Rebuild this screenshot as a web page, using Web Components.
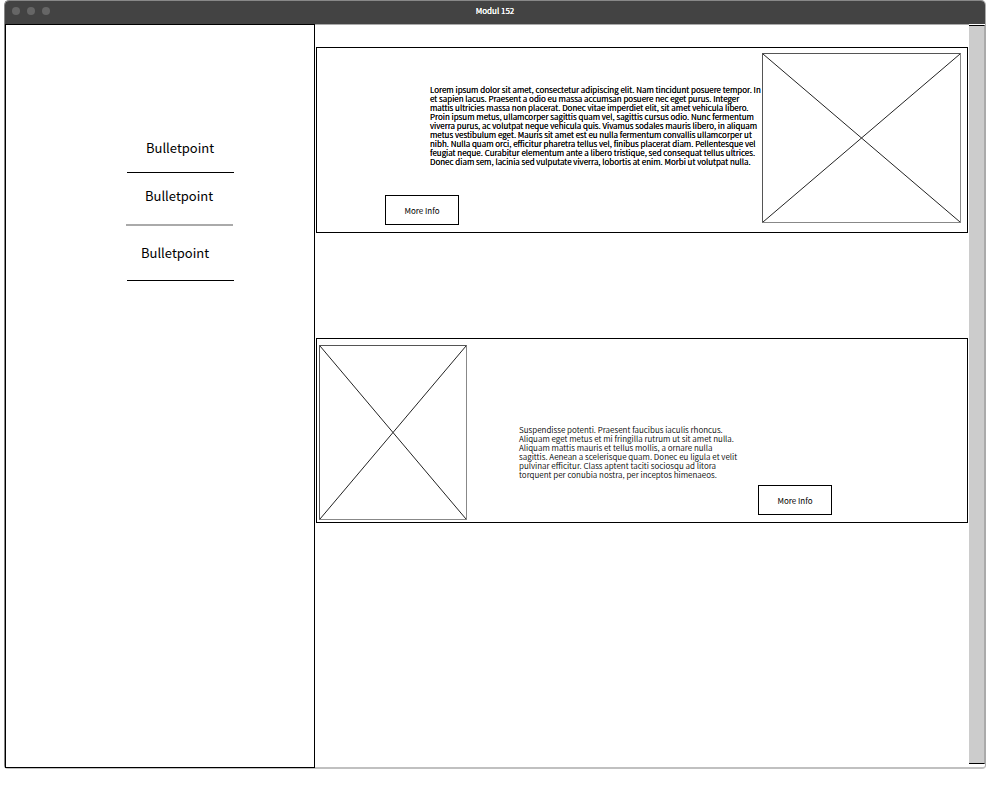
<!DOCTYPE html>
<html lang="en">
<head>
<meta charset="utf-8">
<meta name="viewport" content="width=device-width, initial-scale=1">
<title>Modul 152</title>
<style>
  body { margin: 0; background: #fff; color: #000; font-family: "Noto Sans CJK SC", "Noto Sans", sans-serif; }
</style>
</head>
<body>
<app-window>
  <span slot="title">Modul 152</span>
  <side-menu slot="side">
    <menu-entry>Bulletpoint</menu-entry>
    <menu-entry class="soft">Bulletpoint</menu-entry>
    <menu-entry class="last">Bulletpoint</menu-entry>
  </side-menu>
  <info-card>Lorem ipsum dolor sit amet, consectetur adipiscing elit. Nam tincidunt posuere tempor. In<br>
    et sapien lacus. Praesent a odio eu massa accumsan posuere nec eget purus. Integer<br>
    mattis ultricies massa non placerat. Donec vitae imperdiet elit, sit amet vehicula libero.<br>
    Proin ipsum metus, ullamcorper sagittis quam vel, sagittis cursus odio. Nunc fermentum<br>
    viverra purus, ac volutpat neque vehicula quis. Vivamus sodales mauris libero, in aliquam<br>
    metus vestibulum eget. Mauris sit amet est eu nulla fermentum convallis ullamcorper ut<br>
    nibh. Nulla quam orci, efficitur pharetra tellus vel, finibus placerat diam. Pellentesque vel<br>
    feugiat neque. Curabitur elementum ante a libero tristique, sed consequat tellus ultrices.<br>
    Donec diam sem, lacinia sed vulputate viverra, lobortis at enim. Morbi ut volutpat nulla.</info-card>
  <info-card class="flip">Suspendisse potenti. Praesent faucibus iaculis rhoncus.<br>
    Aliquam eget metus et mi fringilla rutrum ut sit amet nulla.<br>
    Aliquam mattis mauris et tellus mollis, a ornare nulla<br>
    sagittis. Aenean a scelerisque quam. Donec eu ligula et velit<br>
    pulvinar efficitur. Class aptent taciti sociosqu ad litora<br>
    torquent per conubia nostra, per inceptos himenaeos.</info-card>
</app-window>
<script>
  const define = (name, html) => {
    const template = document.createElement('template');
    template.innerHTML = html;
    customElements.define(name, class extends HTMLElement {
      constructor() {
        super();
        this.attachShadow({ mode: 'open' }).append(template.content.cloneNode(true));
      }
    });
  };

  define('app-window', `
    <style>
      :host { display: flex; flex-direction: column; box-sizing: border-box;
        min-height: calc(100vh - 30px); margin: 0 20px 30px 4px;
        border: 1px solid #888; border-right-color: #aaa; border-bottom: 2px solid #c0c0c0;
        border-radius: 5px 5px 4px 4px; }
      header { display: grid; grid-template-columns: 1fr auto 1fr; align-items: center; box-sizing: border-box;
        height: 23px; padding-bottom: 3px; background: #434343; color: #fff; border-radius: 4px 4px 0 0; }
      h1 { margin: 0; font-size: 8px; line-height: 12px; font-weight: 400;
        text-shadow: 0 0 0 currentColor; }
      .dots { display: flex; gap: 7px; padding-left: 7px; }
      .dots i { width: 8px; height: 8px; border-radius: 50%; background: #666; }
      .body { flex: 1; display: flex; }
      main { flex: 1; min-width: 0; display: flex; flex-direction: column; gap: 105px;
        padding: 22px 1px 0; border-top: 1px solid #aaa; }
      .scroll { box-sizing: border-box; width: 16px; margin: 1px 0 3px; background: #ccc;
        border: 1px solid #000; border-left: 0; border-right-color: #aaa; }
    </style>
    <header>
      <div class="dots"><i></i><i></i><i></i></div>
      <h1><slot name="title"></slot></h1>
    </header>
    <div class="body">
      <slot name="side"></slot>
      <main><slot></slot></main>
      <div class="scroll"></div>
    </div>`);

  define('side-menu', `
    <style>
      :host { display: block; box-sizing: border-box; width: 310px; flex: none;
        border: 1px solid #000; padding-top: 113px; margin-bottom: -1px; }
      nav { display: flex; flex-direction: column; width: 107px; margin-left: 121px; }
    </style>
    <nav><slot></slot></nav>`);

  define('menu-entry', `
    <style>
      :host { display: block; padding: 0 0 14px 19px; border-bottom: 1px solid #000; }
      :host(.soft) { margin: 13px 1px 0 -1px; padding-bottom: 18px; border-bottom: 2px solid #aaa; }
      :host(.last) { margin-top: 17px; padding: 0 0 17px 14px; }
      a { display: block; color: inherit; text-decoration: none; font-size: 13px; line-height: 20px; }
    </style>
    <a href="#"><slot></slot></a>`);

  define('info-card', `
    <style>
      :host { display: flex; box-sizing: border-box; height: 186px; border: 1px solid #000; }
      .text { flex: 1; min-width: 0; display: flex; flex-direction: column;
        justify-content: space-between; padding: 37px 0 7px 68px; }
      p { margin: 0 0 0 45px; font-size: 8px; line-height: 9px; font-weight: 350; white-space: nowrap;
        text-shadow: 0 0 0 currentColor; }
      more-button { align-self: flex-start; }
      picture-box { width: 199px; height: 170px; margin: 5px 6px 0 0; }
      :host(.flip) { flex-direction: row-reverse; height: 185px; }
      :host(.flip) .text { padding: 86px 135px 7px 52px; }
      :host(.flip) p { margin: 0; text-shadow: none; }
      :host(.flip) more-button { align-self: flex-end; }
      :host(.flip) picture-box { width: 148px; height: 175px; margin: 6px 0 0 2px; }
    </style>
    <div class="text">
      <p><slot></slot></p>
      <more-button>More Info</more-button>
    </div>
    <picture-box></picture-box>`);

  define('more-button', `
    <style>
      :host { display: block; }
      button { display: block; width: 74px; height: 30px; padding: 2px 0 0; border: 1px solid #000;
        border-radius: 0; background: #fff; color: inherit; font: inherit; font-size: 8px; line-height: 12px; }
    </style>
    <button type="button"><slot></slot></button>`);

  define('picture-box', `
    <style>
      :host { display: block; flex: none; box-sizing: border-box;
        border: 1px solid #555; border-right-color: #888; border-bottom-color: #888; }
      svg { display: block; width: 100%; height: 100%; }
      line { stroke: #222; stroke-width: 1; }
    </style>
    <svg role="img" aria-label="Picture">
      <line x1="0" y1="0" x2="100%" y2="100%"/>
      <line x1="0" y1="100%" x2="100%" y2="0"/>
    </svg>`);
</script>
</body>
</html>
